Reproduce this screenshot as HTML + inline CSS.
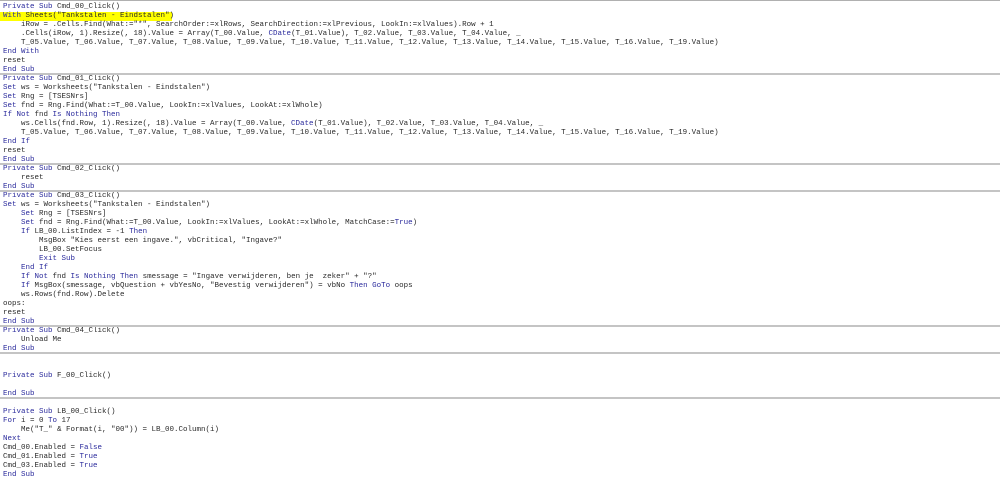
<!DOCTYPE html>
<html><head><meta charset="utf-8"><style>
html,body{margin:0;padding:0;background:#fff;width:1000px;height:475px;overflow:hidden}
#c{position:absolute;left:3px;top:3px;right:0;font-family:"Liberation Mono",monospace;font-size:7.5px;color:#2a2a2a}
#c div{height:9px;line-height:9px;position:relative;white-space:pre}
.s::before{content:"";position:absolute;left:-3px;width:1000px;top:-1.6px;height:1.4px;background:#c4c4c4}
k{color:#2a2a9c}
.hl{background:#ffff00;margin-left:-3px;padding-left:3px;width:169px}
#top{position:absolute;left:0;top:0;width:1000px;height:1px;background:#b0b0b0}
</style></head><body>
<div id="top"></div>
<div id="c"><div><k>Private Sub</k> Cmd_00_Click()</div><div class="hl"><k>With</k> Sheets("Tankstalen - Eindstalen")</div><div>    iRow = .Cells.Find(What:="*", SearchOrder:=xlRows, SearchDirection:=xlPrevious, LookIn:=xlValues).Row + 1</div><div>    .Cells(iRow, 1).Resize(, 18).Value = Array(T_00.Value, <k>CDate</k>(T_01.Value), T_02.Value, T_03.Value, T_04.Value, _</div><div>    T_05.Value, T_06.Value, T_07.Value, T_08.Value, T_09.Value, T_10.Value, T_11.Value, T_12.Value, T_13.Value, T_14.Value, T_15.Value, T_16.Value, T_19.Value)</div><div><k>End With</k></div><div>reset</div><div><k>End Sub</k></div><div class="s"><k>Private Sub</k> Cmd_01_Click()</div><div><k>Set</k> ws = Worksheets("Tankstalen - Eindstalen")</div><div><k>Set</k> Rng = [TSESNrs]</div><div><k>Set</k> fnd = Rng.Find(What:=T_00.Value, LookIn:=xlValues, LookAt:=xlWhole)</div><div><k>If Not</k> fnd <k>Is Nothing Then</k></div><div>    ws.Cells(fnd.Row, 1).Resize(, 18).Value = Array(T_00.Value, <k>CDate</k>(T_01.Value), T_02.Value, T_03.Value, T_04.Value, _</div><div>    T_05.Value, T_06.Value, T_07.Value, T_08.Value, T_09.Value, T_10.Value, T_11.Value, T_12.Value, T_13.Value, T_14.Value, T_15.Value, T_16.Value, T_19.Value)</div><div><k>End If</k></div><div>reset</div><div><k>End Sub</k></div><div class="s"><k>Private Sub</k> Cmd_02_Click()</div><div>    reset</div><div><k>End Sub</k></div><div class="s"><k>Private Sub</k> Cmd_03_Click()</div><div><k>Set</k> ws = Worksheets("Tankstalen - Eindstalen")</div><div>    <k>Set</k> Rng = [TSESNrs]</div><div>    <k>Set</k> fnd = Rng.Find(What:=T_00.Value, LookIn:=xlValues, LookAt:=xlWhole, MatchCase:=<k>True</k>)</div><div>    <k>If</k> LB_00.ListIndex = -1 <k>Then</k></div><div>        MsgBox "Kies eerst een ingave.", vbCritical, "Ingave?"</div><div>        LB_00.SetFocus</div><div>        <k>Exit Sub</k></div><div>    <k>End If</k></div><div>    <k>If Not</k> fnd <k>Is Nothing Then</k> smessage = "Ingave verwijderen, ben je  zeker" + "?"</div><div>    <k>If</k> MsgBox(smessage, vbQuestion + vbYesNo, "Bevestig verwijderen") = vbNo <k>Then GoTo</k> oops</div><div>    ws.Rows(fnd.Row).Delete</div><div>oops:</div><div>reset</div><div><k>End Sub</k></div><div class="s"><k>Private Sub</k> Cmd_04_Click()</div><div>    Unload Me</div><div><k>End Sub</k></div><div class="s"> </div><div> </div><div><k>Private Sub</k> F_00_Click()</div><div> </div><div><k>End Sub</k></div><div class="s"> </div><div><k>Private Sub</k> LB_00_Click()</div><div><k>For</k> i = 0 <k>To</k> 17</div><div>    Me("T_" &amp; Format(i, "00")) = LB_00.Column(i)</div><div><k>Next</k></div><div>Cmd_00.Enabled = <k>False</k></div><div>Cmd_01.Enabled = <k>True</k></div><div>Cmd_03.Enabled = <k>True</k></div><div><k>End Sub</k></div></div>
</body></html>
